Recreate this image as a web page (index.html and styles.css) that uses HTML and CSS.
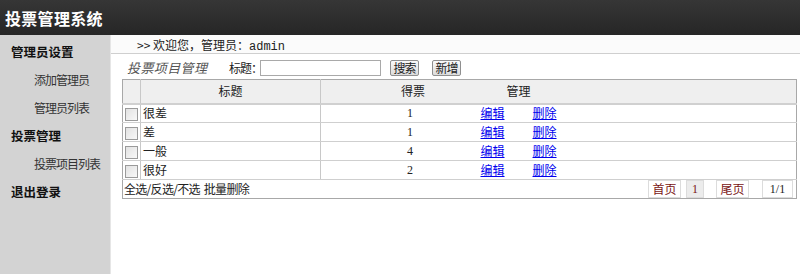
FILE: index.html
```html
<!DOCTYPE html>
<html lang="zh">
<head>
<meta charset="utf-8">
<title>投票管理系统</title>
<link rel="stylesheet" href="styles.css">
</head>
<body>
<div class="header"><h1 class="logo">投票管理系统</h1></div>
<div class="layout">
  <aside class="sidebar">
    <div class="group">管理员设置</div>
    <a class="item">添加管理员</a>
    <a class="item">管理员列表</a>
    <div class="group">投票管理</div>
    <a class="item">投票项目列表</a>
    <div class="group">退出登录</div>
  </aside>
  <main class="main">
    <div class="welcome">&gt;&gt; 欢迎您，管理员：<span class="latin">admin</span></div>
    <div class="toolbar">
      <span class="page-title">投票项目管理</span>
      <label class="search-label">标题：</label>
      <input class="search-input" type="text">
      <button class="btn btn-search">搜索</button>
      <button class="btn btn-add">新增</button>
    </div>
    <table class="grid">
      <colgroup>
        <col class="c-check"><col class="c-title"><col class="c-votes"><col class="c-manage">
      </colgroup>
      <thead>
        <tr><th></th><th>标题</th><th class="th-votes">得票</th><th class="th-manage">管理</th></tr>
      </thead>
      <tbody>
        <tr><td class="td-check"><span class="cb"></span></td><td class="td-title">很差</td><td class="td-votes">1</td><td class="td-manage"><a href="#">编辑</a><a href="#" class="del">删除</a></td></tr>
        <tr><td class="td-check"><span class="cb"></span></td><td class="td-title">差</td><td class="td-votes">1</td><td class="td-manage"><a href="#">编辑</a><a href="#" class="del">删除</a></td></tr>
        <tr><td class="td-check"><span class="cb"></span></td><td class="td-title">一般</td><td class="td-votes">4</td><td class="td-manage"><a href="#">编辑</a><a href="#" class="del">删除</a></td></tr>
        <tr><td class="td-check"><span class="cb"></span></td><td class="td-title">很好</td><td class="td-votes">2</td><td class="td-manage"><a href="#">编辑</a><a href="#" class="del">删除</a></td></tr>
      </tbody>
      <tfoot>
        <tr><td colspan="4" class="foot">
          <div class="foot-row">
            <span class="bulk">全选/反选/不选&nbsp;&nbsp;批量删除</span>
            <div class="pager">
              <span class="pg pg-first">首页</span>
              <span class="pg pg-cur">1</span>
              <span class="pg pg-last">尾页</span>
              <span class="pg pg-count">1/1</span>
            </div>
          </div>
        </td></tr>
      </tfoot>
    </table>
  </main>
</div>
</body>
</html>
```
FILE: styles.css
```css
* { box-sizing: border-box; }
html, body { margin: 0; padding: 0; }
body {
  width: 800px;
  height: 274px;
  overflow: hidden;
  font-family: "Liberation Serif", "Noto Sans CJK SC", serif;
  font-size: 12px;
  line-height: 14px;
  color: #222;
  background: #fff;
}
.header {
  height: 35px;
  background: linear-gradient(#363636, #262626);
  display: flex;
  align-items: center;
  padding-left: 5px;
}
.logo {
  margin: 0;
  font-family: "Noto Sans CJK SC", sans-serif;
  font-size: 16px;
  line-height: 20px;
  font-weight: bold;
  color: #fff;
  letter-spacing: 0.3px;
}
.layout {
  display: flex;
  height: 239px;
}
.sidebar {
  width: 111px;
  flex: none;
  background: #d3d3d3;
  border-right: 1px solid #e6e6e6;
  display: flex;
  flex-direction: column;
  padding-top: 7px;
  font-family: "Noto Sans CJK SC", sans-serif;
  font-size: 12px;
  white-space: nowrap;
}
.group {
  height: 28px;
  line-height: 20px;
  padding-left: 11px;
  font-weight: bold;
  font-size: 12.5px;
  color: #111;
}
.item {
  height: 28px;
  line-height: 20px;
  padding-left: 34px;
  letter-spacing: -1px;
  color: #333;
}
.main {
  flex: 1;
  display: flex;
  flex-direction: column;
  min-width: 0;
}
.welcome {
  height: 19px;
  line-height: 19px;
  background: #fbfbfb;
  border-bottom: 1px solid #cfcfcf;
  padding-left: 26px;
  font-family: "Noto Sans CJK SC", sans-serif;
  font-size: 12px;
  color: #222;
  white-space: nowrap;
}
.latin { font-family: "Liberation Mono", monospace; font-size: 12px; }
.toolbar {
  height: 25px;
  display: flex;
  align-items: center;
  padding-left: 16px;
  padding-top: 2px;
  white-space: nowrap;
}
.page-title {
  font-family: "Noto Sans CJK SC", sans-serif;
  font-style: italic;
  font-size: 13px;
  letter-spacing: 0.4px;
  color: #555;
  width: 102px;
  flex: none;
}
.search-label {
  font-family: "Noto Sans CJK SC", sans-serif;
  font-size: 12px;
  color: #222;
  width: 31px;
  flex: none;
  letter-spacing: -1px;
}
.search-input {
  flex: none;
  width: 121px;
  height: 16px;
  border: 1px solid #a9a9a9;
  padding: 0;
  margin: 0 9px 0 0;
}
.btn {
  flex: none;
  height: 16px;
  width: 29px;
  padding: 0;
  font-family: "Noto Sans CJK SC", sans-serif;
  font-size: 12px;
  line-height: 14px;
  color: #222;
  background: linear-gradient(#fafafa, #dcdcdc);
  border: 1px solid #8f8f8f;
  border-radius: 2px;
  white-space: nowrap;
  letter-spacing: -1px;
}
.btn-search { margin-right: 13px; }
.grid {
  margin-left: 11px;
  width: 675px;
  border-collapse: collapse;
  border: 1px solid #a8a8a8;
  table-layout: fixed;
  font-family: "Noto Sans CJK SC", sans-serif;
}
.c-check { width: 18px; }
.c-title { width: 180px; }
.c-votes { width: 160px; }
.grid th {
  height: 24px;
  background: #efefef;
  font-weight: normal;
  font-size: 12px;
  line-height: 14px;
  color: #222;
  border-bottom: 2px solid #d0d0d0;
  padding: 0;
}
.grid th:nth-child(1), .grid th:nth-child(2),
.grid td.td-check, .grid td.td-title { border-right: 1px solid #c8c8c8; }
.th-votes { text-align: left; padding-left: 80px !important; }
.th-manage { text-align: left; padding-left: 26px !important; }
.grid td {
  height: 19px;
  padding: 0;
  border-bottom: 1px solid #cfcfcf;
  font-size: 12px;
  line-height: 14px;
}
.td-check { text-align: center; }
.cb {
  display: inline-block;
  width: 13px;
  height: 13px;
  border: 1px solid #9a9a9a;
  background: linear-gradient(135deg, #e2e2e2, #f8f8f8);
  vertical-align: middle;
}
.td-title { padding-left: 2px !important; }
.td-votes { padding-left: 86px !important; font-family: "Liberation Serif", serif; }
.td-manage a { color: #0000ee; text-decoration: underline; }
.td-manage a.del { margin-left: 28px; }
.foot { height: 20px; border-bottom: none !important; }
.foot-row { display: flex; align-items: center; justify-content: space-between; }
.bulk { padding-left: 1px; color: #222; letter-spacing: -0.7px; }
.pager { display: flex; align-items: center; padding-right: 3px; }
.pg {
  height: 18px;
  line-height: 16px;
  border: 1px solid #dcdcdc;
  text-align: center;
  color: #7a1414;
  background: #fff;
}
.pg-first { width: 33px; }
.pg-cur { width: 18px; margin-left: 5px; background: #ececec; font-family: "Liberation Serif", serif; }
.pg-last { width: 33px; margin-left: 12px; }
.pg-count { width: 31px; margin-left: 13px; color: #222; font-family: "Liberation Serif", serif; }
```
